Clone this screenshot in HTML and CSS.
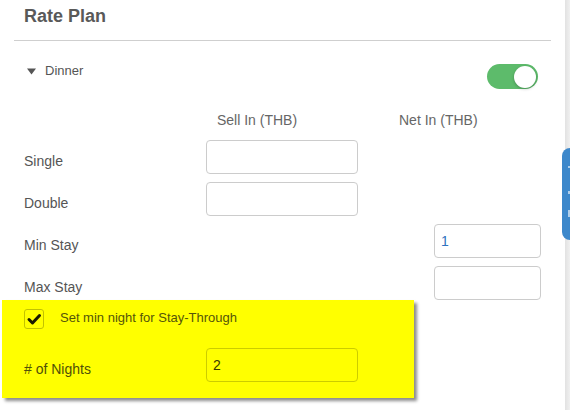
FILE: index.html
```html
<!DOCTYPE html>
<html>
<head>
<meta charset="utf-8">
<link rel="stylesheet" href="styles.css">
</head>
<body>
<div class="page">
  <div class="panel">
    <h2 class="title">Rate Plan</h2>
    <div class="divider"></div>
    <div class="section-head">
      <div class="section-name">
        <svg class="caret" width="9" height="7" viewBox="0 0 9 7"><path d="M0 0.5 H9 L4.5 6.5 Z" fill="#555"/></svg>
        <span>Dinner</span>
      </div>
      <div class="toggle"><div class="knob"></div></div>
    </div>
    <div class="grid">
      <div class="head-spacer"></div>
      <div class="col-head sell">Sell In (THB)</div>
      <div class="col-head net">Net In (THB)</div>

      <div class="label">Single</div>
      <div class="field"><input class="input" type="text"></div>
      <div class="empty"></div>

      <div class="label">Double</div>
      <div class="field"><input class="input" type="text"></div>
      <div class="empty"></div>

      <div class="label">Min Stay</div>
      <div class="empty2"></div>
      <div class="field"><input class="input num" type="text" value="1"></div>

      <div class="label">Max Stay</div>
      <div class="empty2"></div>
      <div class="field"><input class="input" type="text"></div>
    </div>
    <div class="highlight">
      <div class="check-row">
        <div class="checkbox">
          <svg width="20" height="20" viewBox="0 0 20 20"><path d="M5 10.5 L8.5 14 L15.5 6.5" fill="none" stroke="#1a1a00" stroke-width="3" stroke-linecap="round" stroke-linejoin="round"/></svg>
        </div>
        <span class="check-text">Set min night for Stay-Through</span>
      </div>
      <div class="nights-row">
        <div class="label hl">&#35; of Nights</div>
        <input class="input hl-input" type="text" value="2">
      </div>
    </div>
  </div>
  <div class="sidebar"></div>
  <div class="tab">
    <span class="mark m1"></span>
    <span class="mark m2"></span>
    <span class="mark m3"></span>
  </div>
</div>
</body>
</html>
```

FILE: styles.css
```css
html, body {
  margin: 0;
  padding: 0;
  background: #fff;
}
body {
  font-family: "Liberation Sans", Arial, sans-serif;
  color: #555;
  width: 570px;
  height: 410px;
  overflow: hidden;
}
.page {
  position: relative;
  display: flex;
  width: 570px;
  height: 410px;
}
.panel {
  width: 537px;
  margin-left: 14px;
  flex: none;
}
.title {
  margin: 0;
  padding: 6px 0 0 10px;
  font-size: 18px;
  line-height: 20px;
  font-weight: bold;
  color: #595959;
}
.divider {
  margin-top: 14px;
  height: 1px;
  background: #cfcfcf;
}
.section-head {
  margin-top: 22px;
  display: flex;
  justify-content: space-between;
  align-items: flex-start;
  padding-left: 13px;
  padding-right: 13px;
}
.section-name {
  display: flex;
  align-items: center;
  font-size: 13px;
  line-height: 16px;
  color: #555;
}
.caret {
  margin-right: 9px;
}
.toggle {
  margin-top: 1px;
  width: 51px;
  height: 25px;
  border-radius: 13px;
  background: #5dbb6b;
  display: flex;
  align-items: center;
  justify-content: flex-end;
  padding-right: 2px;
  box-sizing: border-box;
}
.knob {
  width: 22px;
  height: 22px;
  border-radius: 50%;
  background: #fff;
  box-shadow: 0 1px 3px rgba(0,0,0,0.25);
}
.grid {
  display: grid;
  grid-template-columns: 182px 152px 76px 107px;
  row-gap: 8px;
  margin-left: 10px;
  margin-top: 21px;
}
.head-spacer { grid-column: 1; }
.col-head {
  font-size: 14px;
  line-height: 20px;
  color: #666;
  margin-bottom: 2px;
}
.col-head.sell {
  grid-column: 2;
  padding-left: 11px;
}
.col-head.net {
  grid-column: 3 / 5;
  padding-left: 41px;
}
.label {
  font-size: 14px;
  line-height: 20px;
  padding-top: 11px;
  color: #555;
  grid-column: 1;
}
.empty { grid-column: 3 / 5; }
.empty2 { grid-column: 2 / 4; }
.field { display: flex; }
.input {
  box-sizing: border-box;
  width: 100%;
  height: 34px;
  border: 1px solid #cccccc;
  border-radius: 4px;
  padding: 0 6px;
  font-family: "Liberation Sans", Arial, sans-serif;
  font-size: 14px;
  color: #555;
  background: #fff;
  outline: none;
}
.input.num { color: #2f73c0; }
.highlight {
  margin-left: -12px;
  width: 412px;
  height: 98px;
  box-sizing: border-box;
  background: #ffff00;
  box-shadow: 3px 3px 3px rgba(0,0,0,0.45);
  padding: 9px 0 0 22px;
}
.check-row {
  display: flex;
  align-items: flex-start;
}
.checkbox {
  width: 20px;
  height: 20px;
  box-sizing: border-box;
  border: 1px solid #c2c200;
  border-radius: 3px;
  display: flex;
  align-items: center;
  justify-content: center;
}
.checkbox svg {
  display: block;
  flex: none;
}
.check-text {
  margin-left: 16px;
  font-size: 13px;
  line-height: 16px;
  margin-top: 1px;
  color: #55550a;
}
.nights-row {
  display: grid;
  grid-template-columns: 182px 152px;
  margin-top: 19px;
}
.label.hl {
  color: #505008;
}
.hl-input {
  background: transparent;
  border-color: #cccc00;
  color: #3a3a00;
}
.sidebar {
  position: absolute;
  right: 0;
  top: 0;
  width: 5px;
  height: 410px;
  background: linear-gradient(to right, #e2e2e2, #f0f0f0);
}
.tab {
  position: absolute;
  left: 562px;
  top: 148px;
  width: 8px;
  height: 92px;
  background: #3d88cb;
  border-radius: 8px 0 0 8px;
}
.mark {
  position: absolute;
  left: 6px;
  width: 2px;
  background: rgba(255,255,255,0.6);
}
.m1 { top: 18px; height: 2px; }
.m2 { top: 43px; height: 3px; }
.m3 { top: 62px; height: 7px; }
```
